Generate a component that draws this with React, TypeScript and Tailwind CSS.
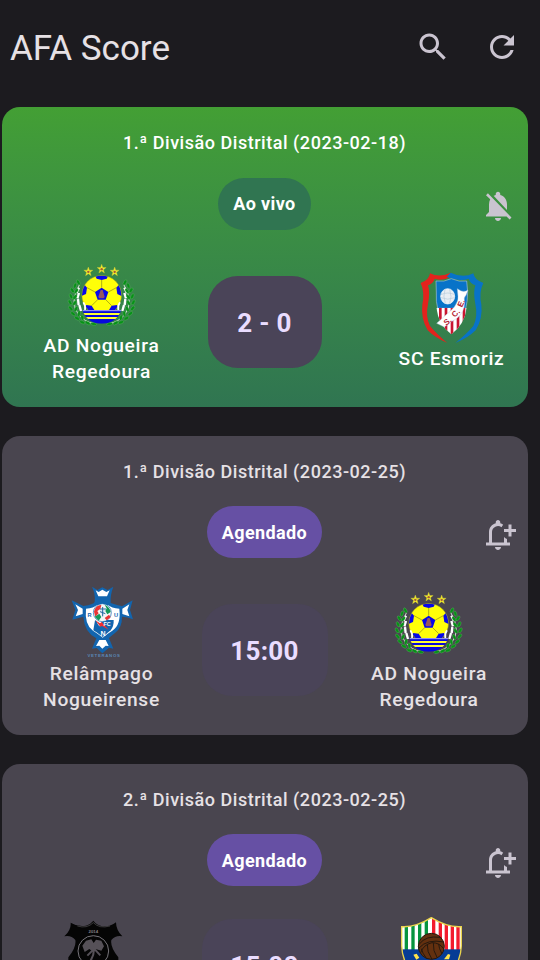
import React from "react";

const leaves = [
  [52, 82, -30], [42, 92, 20], [34, 106, -35], [46, 108, 35], [30, 124, -25], [42, 126, 40], [27, 142, -30],
  [41, 144, 35], [29, 160, -40], [45, 162, 25], [36, 176, -50], [54, 176, 10], [48, 190, -60], [64, 188, -15],
  [64, 202, -70], [80, 204, -60], [98, 207, -80],
];

function LaurelHalf() {
  return (
    <g>
      <path d="M55 90Q25 142 52 178Q72 202 100 206" fill="none" stroke="#e8f5e6" strokeWidth="2.5" />
      <path d="M54 98l-8 16M54 114l-5 16M51 132l2 18M55 150l5 18" stroke="#fff" strokeWidth="7" />
      {leaves.map(([x, y, r], i) => (
        <ellipse key={i} cx={x} cy={y} rx="4.2" ry="8.5" fill="#079018" stroke="#7cc878" strokeWidth="0.8" transform={`rotate(${r} ${x} ${y})`} />
      ))}
    </g>
  );
}

function Star({ x, y }: { x: number; y: number }) {
  return (
    <g transform={`translate(${x} ${y})`}>
      <path d="M0-14 3.4-4.5 13.5-4.3 5.5 2 8.3 12 0 6-8.3 12-5.5 2-13.5-4.3-3.4-4.5Z" fill="#f4ee2a" stroke="#cbc437" strokeWidth="1.2" />
      <circle r="3.6" cy="0.5" fill="#a65a38" />
    </g>
  );
}

function NogueiraCrest() {
  return (
    <svg viewBox="15 15 216 216" className="size-[72px] overflow-visible">
      <LaurelHalf />
      <g transform="translate(244 0) scale(-1 1)"><LaurelHalf /></g>
      <Star x={82} y={50} />
      <Star x={122} y={42} />
      <Star x={161} y={50} />
      <clipPath id="ball"><circle cx="122" cy="121" r="59" /></clipPath>
      <clipPath id="base"><path d="M64 165H181Q166 206 122 206Q78 206 64 165Z" /></clipPath>
      <circle cx="122" cy="121" r="59.5" fill="#ffff08" stroke="#9c9a20" strokeWidth="1.5" />
      <g clipPath="url(#ball)">
        <g fill="#0808e8">
          <path d="M100 58H144L137 71 122 75 107 71Z" />
          <path d="M58 104 68 86 78 98 75 117 60 124Z" />
          <path d="M186 104 176 86 166 98 169 117 184 124Z" />
          <path d="M76 150 92 152 102 168 90 180 68 166Z" />
          <path d="M168 150 152 152 142 168 154 180 176 166Z" />
          <path d="M122 98 142 111 134 134H110L102 111Z" />
        </g>
        <path d="M122 75V98M78 98 102 111M166 98 142 111M92 152 110 134M152 152 134 134" stroke="#8c8912" strokeWidth="2" />
      </g>
      <path d="M119 105h6l6 21-3 4h-13l-3-4Z" fill="#97555f" />
      <path d="M67 142q8 12 5 24M177 142q-8 12-5 24" stroke="#fff" strokeWidth="5" fill="none" />
      <g clipPath="url(#base)">
        <rect x="60" y="164" width="125" height="44" fill="#0808dc" />
        <path d="M60 177H185M60 189H185" stroke="#ffff30" strokeWidth="5.5" />
        <path d="M60 167H185" stroke="#fff" strokeWidth="2" />
      </g>
    </svg>
  );
}

function EsmorizCrest() {
  return (
    <svg viewBox="18 33 216 216" className="size-[72px] overflow-visible">
      <path d="M60 34Q58 54 32 63Q45 92 37 128Q32 169 53 205Q76 228 112 243Q80 216 60 192Q46 163 54 126Q61 91 54 70Q70 64 74 50Q98 58 122 44V32Q88 48 60 34Z" fill="#e3231d" />
      <path d="M190 34Q193 54 220 63Q206 92 214 128Q219 169 197 205Q174 228 136 243Q170 216 190 192Q204 163 196 126Q189 91 196 70Q180 64 176 50Q150 60 110 44L122 32Q160 50 190 34Z" fill="#0873c8" />
      <path d="M78 57Q102 61 124 50Q148 61 170 57L173 90Q173 118 166 145H84Q77 118 79 90Z" fill="#0873c8" stroke="#9dbde0" strokeWidth="2" />
      <clipPath id="stripes"><path d="M79 137H170Q164 187 124 217Q86 190 79 137Z" /></clipPath>
      <g clipPath="url(#stripes)">
        <rect x="76" y="134" width="98" height="86" fill="#fff" />
        <path d="M91 135V218M108 135V218M126 135V218M144 135V218M162 135V218" stroke="#c91530" strokeWidth="8" />
      </g>
      <ellipse cx="113" cy="103" rx="21" ry="23" fill="#e9eef3" stroke="#fff" strokeWidth="2" />
      <path d="M93 98Q113 88 134 98M93 107Q113 116 134 107M105 82Q98 103 106 124M119 82Q127 103 119 124" fill="none" stroke="#b5cadb" strokeWidth="2" />
      <path d="M142 80Q160 94 174 84L168 100Q160 106 164 122Q163 150 142 168Q118 182 103 195L80 184Q95 171 103 163Q122 148 133 135Q146 116 144 103Z" fill="#fff" stroke="#adc6de" strokeWidth="1.2" />
      <g fill="#b31830" fontFamily="'Liberation Sans', sans-serif" fontWeight="700" fontSize="24" textAnchor="middle">
        <text transform="translate(118 184) rotate(-38)">S.</text>
        <text transform="translate(143 159) rotate(-45)">C.</text>
        <text transform="translate(161 127) rotate(-65)">E.</text>
      </g>
    </svg>
  );
}

function RelampagoCrest() {
  return (
    <svg viewBox="15 25 216 216" className="size-[72px] overflow-visible">
      <path d="M93 21 109 31 124 23 140 31 157 21Q147 47 149 70Q176 78 183 80L215 62 207 91 216 119Q199 111 183 111Q184 143 162 160Q147 171 144 176L157 207 144 204 124 221 107 205 93 207 106 176Q70 157 67 111L34 120 43 91 32 62 67 79Q98 75 101 67Q104 44 93 21Z" fill="#1265af" />
      <path d="M104 32 113 37 124 30 136 37 146 32 138 50H112Z" fill="#fff" />
      <path d="M43 74 65 87V103L44 110 51 91ZM205 74 184 87V103L205 110 199 91Z" fill="#fff" />
      <path d="M115 181H134L143 199 134 198 124 207 115 198 105 199Z" fill="#fff" />
      <path d="M75 87Q99 85 108 76H141Q151 85 175 87Q181 135 154 153Q139 162 125 174Q111 162 96 153Q70 135 75 87Z" fill="#fff" />
      <path d="M106 123Q113 143 125 145V172Q111 160 97 152L102 122Z" fill="#1265af" />
      <path d="M126 121H158Q159 139 149 152L125 172 113 144Z" fill="#1265af" />
      <circle cx="124" cy="99" r="27" fill="#f5f5f5" stroke="#1265af" strokeWidth="2" />
      <path d="M99 96Q104 75 121 76L118 88 109 94 113 101 103 111ZM131 115 144 105 149 113 137 122Z" fill="#e83536" />
      <path d="M131 75Q146 82 149 97L139 104 133 94 137 86ZM101 111 115 102 121 112 113 123Z" fill="#12985a" />
      <path d="M116 90H133L125 113Z" fill="#dbe9f5" />
      <path d="M117 88H135M125 82V110M117 96 133 102" stroke="#23669f" strokeWidth="3" />
      <path d="M103 122 117 131 122 127 143 150 123 139 118 141Z" fill="#ec3030" />
      <g fill="#1265af" fontFamily="'Liberation Sans', sans-serif" fontWeight="700" textAnchor="middle">
        <text x="86" y="111" fontSize="17">R</text>
        <text x="165" y="111" fontSize="17">U</text>
        <text x="138" y="139" fontSize="16" fill="#fff">FC</text>
        <text x="126" y="168" fontSize="21" fill="#fff">N</text>
        <text x="128" y="233" fontSize="13" fill="#5b87b5" textLength="97">VETERANOS</text>
      </g>
    </svg>
  );
}

function BlackCrest() {
  return (
    <svg viewBox="18 20 216 216" className="size-[72px] overflow-visible">
      <path d="M59 40Q82 54 105 49Q119 45 127 34Q137 47 151 50Q176 54 195 39Q195 62 214 81Q194 77 181 92Q177 113 202 144V220H52V144Q77 113 73 92Q61 77 40 81Q61 62 59 40Z" fill="#050505" />
      <path d="M79 50Q108 59 127 40Q145 59 177 50" fill="none" stroke="#777579" strokeWidth="1.4" />
      <text x="127" y="71" fontSize="13" fontWeight="700" textAnchor="middle" fill="#858087" fontFamily="'Liberation Sans', sans-serif">2014</text>
      <circle cx="127" cy="125" r="46" fill="none" stroke="#77747a" strokeWidth="3" />
      <path d="M105 94 121 90 128 101 135 91 151 94 159 111 151 124 136 120 127 128 115 119 101 128 94 109Z" fill="#565158" />
      <path d="M128 111Q132 133 118 155M127 121 109 139M132 121 148 138" stroke="#565158" strokeWidth="6" fill="none" />
    </svg>
  );
}

function StripedCrest() {
  return (
    <svg viewBox="15 20 216 216" className="size-[72px] overflow-visible">
      <clipPath id="shield"><path d="M35 52Q76 55 124 25Q172 55 214 52V110Q211 190 124 226Q38 190 35 110Z" /></clipPath>
      <g clipPath="url(#shield)">
        <rect x="34" y="20" width="182" height="210" fill="#fff" />
        <path d="M49 40V130M69 40V130M89 30V130M109 30V130" stroke="#07943e" strokeWidth="10" />
        <path d="M131 20V130M151 30V130M169 35V130M187 45V130M204 45V130" stroke="#f21c2d" strokeWidth="10" />
        <rect x="35" y="120" width="180" height="110" fill="#063c95" />
      </g>
      <path d="M35 52Q76 55 124 25Q172 55 214 52V110Q211 190 124 226Q38 190 35 110Z" fill="none" stroke="#e9d34c" strokeWidth="4" />
      <path d="M70 136l10-3 8 12-9 6ZM162 150l12-16 7 2-4 14Z" fill="#ffe34c" />
      <circle cx="124" cy="111" r="39" fill="#63300f" stroke="#28170d" strokeWidth="3" />
      <path d="M88 104Q108 78 150 84M87 116Q112 88 161 98M92 130Q100 106 126 100Q148 100 161 118M110 148Q96 130 94 118M126 150Q110 126 112 106M142 146Q128 124 130 101M156 134Q146 116 146 104" fill="none" stroke="#25180e" strokeWidth="3" />
    </svg>
  );
}

function BellOff() {
  return (
    <svg viewBox="0 0 24 24" className="size-9" fill="#cac4d0">
      <path d="M20 18.69L7.84 6.14 5.27 3.49 4 4.76l2.8 2.8v.01c-.52.99-.8 2.16-.8 3.42v5l-2 2v1h13.73l2 2L21 19.72l-1-1.03zM12 22c1.11 0 2-.89 2-2h-4c0 1.11.89 2 2 2zm6-7.32V11c0-3.08-1.64-5.64-4.5-6.32V4c0-.83-.67-1.5-1.5-1.5s-1.5.67-1.5 1.5v.68c-.15.03-.29.08-.42.12-.1.03-.2.07-.3.11h-.01c-.01 0-.01 0-.02.01-.23.09-.46.2-.68.31 0 0-.01 0-.01.01L18 14.68z" />
    </svg>
  );
}

function BellAdd() {
  return (
    <svg viewBox="0 0 24 24" className="size-9" fill="#cac4d0">
      <path d="M10 20h4c0 1.1-.9 2-2 2s-2-.9-2-2zM18 14.66V17h2v2H4v-2h2v-7c0-2.79 1.91-5.14 4.5-5.8v-.7C10.5 2.67 11.17 2 12 2s1.5.67 1.5 1.5v.7c.71.18 1.36.49 1.95.9-.46.53-.83 1.14-1.09 1.8A4 4 0 0 0 8 10v7h8v-3.68c.6.57 1.25 1.04 2 1.34zM24 8h-3V5h-2v3h-3v2h3v3h2v-3h3V8z" />
    </svg>
  );
}

interface TeamProps {
  crest: React.ReactNode;
  name?: string[];
  className?: string;
}

function Team({ crest, name, className = "" }: TeamProps) {
  return (
    <div className={`flex flex-col items-center ${name ? "" : "h-[98px]"} ${className}`}>
      {crest}
      <div className="flex flex-col items-center pt-px">
        {name?.map((line) => (
          <span key={line} className="whitespace-nowrap text-[19.2px] leading-[25.7px] font-medium tracking-[0.72px]">{line}</span>
        ))}
      </div>
    </div>
  );
}

interface MatchProps {
  title: string;
  status: string;
  score: string;
  live?: boolean;
  home: React.ReactNode;
  away: React.ReactNode;
}

function MatchCard({ title, status, score, live, home, away }: MatchProps) {
  return (
    <article className={`h-[299.3px] w-[526px] shrink-0 rounded-[18px] pt-6 ${live ? "bg-linear-to-b from-[#439f34] to-[#307551] text-white" : "bg-[#49454f] text-[#e6e1e5]"}`}>
      <h2 className="text-center text-[18px] leading-6 font-medium tracking-[0.53px]">{title}</h2>
      <div className="mt-[22.5px] grid grid-cols-[1fr_auto_1fr] items-center">
        <span className={`col-start-2 flex h-[52px] items-center rounded-full px-[15px] text-[18px] font-bold tracking-[0.38px] text-white ${live ? "bg-[#307551]" : "bg-[#6650a4]"}`}>{status}</span>
        <button className="mt-[5px] mr-[11.5px] justify-self-end">{live ? <BellOff /> : <BellAdd />}</button>
      </div>
      <div className="mt-[30px] grid grid-cols-[200px_126px_200px] items-center">
        {home}
        <div className={`flex h-[92px] items-center justify-center justify-self-center rounded-[30px] bg-[#4a4458] pt-[2px] text-[26px] font-bold tracking-[0.3px] text-[#eaddff] ${live ? "w-[114px]" : "w-[126px]"}`}>{score}</div>
        {away}
      </div>
    </article>
  );
}

export default function App() {
  return (
    <div className="h-[960px] w-[540px] overflow-hidden bg-[#1c1b1f] font-['Roboto','Noto_Sans',sans-serif]">
      <header className="flex h-[107.3px] items-start pt-[29px] pl-2.5 text-[#e6e1e5]">
        <h1 className="flex-1 pt-px text-[35px] leading-[37px]">AFA Score</h1>
        <button className="mr-[33px]">
          <svg viewBox="0 0 24 24" className="size-9" fill="#cac4d0"><path d="M15.5 14h-.79l-.28-.27C15.41 12.59 16 11.11 16 9.5 16 5.91 13.09 3 9.5 3S3 5.91 3 9.5 5.91 16 9.5 16c1.61 0 3.09-.59 4.23-1.57l.27.28v.79l5 4.99L20.49 19l-4.99-5zm-6 0C7.01 14 5 11.99 5 9.5S7.01 5 9.5 5 14 7.01 14 9.5 11.99 14 9.5 14z" /></svg>
        </button>
        <button className="mr-5">
          <svg viewBox="0 0 24 24" className="size-9" fill="#cac4d0"><path d="M17.65 6.35C16.2 4.9 14.21 4 12 4c-4.42 0-7.99 3.58-7.99 8s3.57 8 7.99 8c3.73 0 6.84-2.55 7.73-6h-2.08c-.82 2.33-3.04 4-5.65 4-3.31 0-6-2.69-6-6s2.69-6 6-6c1.66 0 3.14.69 4.22 1.78L13 11h7V4l-2.35 2.35z" /></svg>
        </button>
      </header>
      <main className="flex flex-col gap-[29px] pl-[1.5px]">
        <MatchCard live title="1.ª Divisão Distrital (2023-02-18)" status="Ao vivo" score="2 - 0"
          home={<Team crest={<NogueiraCrest />} name={["AD Nogueira", "Regedoura"]} />}
          away={<Team crest={<EsmorizCrest />} name={["SC Esmoriz"]} className="pl-[48px]" />} />
        <MatchCard title="1.ª Divisão Distrital (2023-02-25)" status="Agendado" score="15:00"
          home={<Team crest={<RelampagoCrest />} name={["Relâmpago", "Nogueirense"]} />}
          away={<Team crest={<NogueiraCrest />} name={["AD Nogueira", "Regedoura"]} className="pl-[3px]" />} />
        <MatchCard title="2.ª Divisão Distrital (2023-02-25)" status="Agendado" score="15:00"
          home={<Team crest={<BlackCrest />} className="pr-[18px]" />}
          away={<Team crest={<StripedCrest />} className="pl-[7px]" />} />
      </main>
    </div>
  );
}
